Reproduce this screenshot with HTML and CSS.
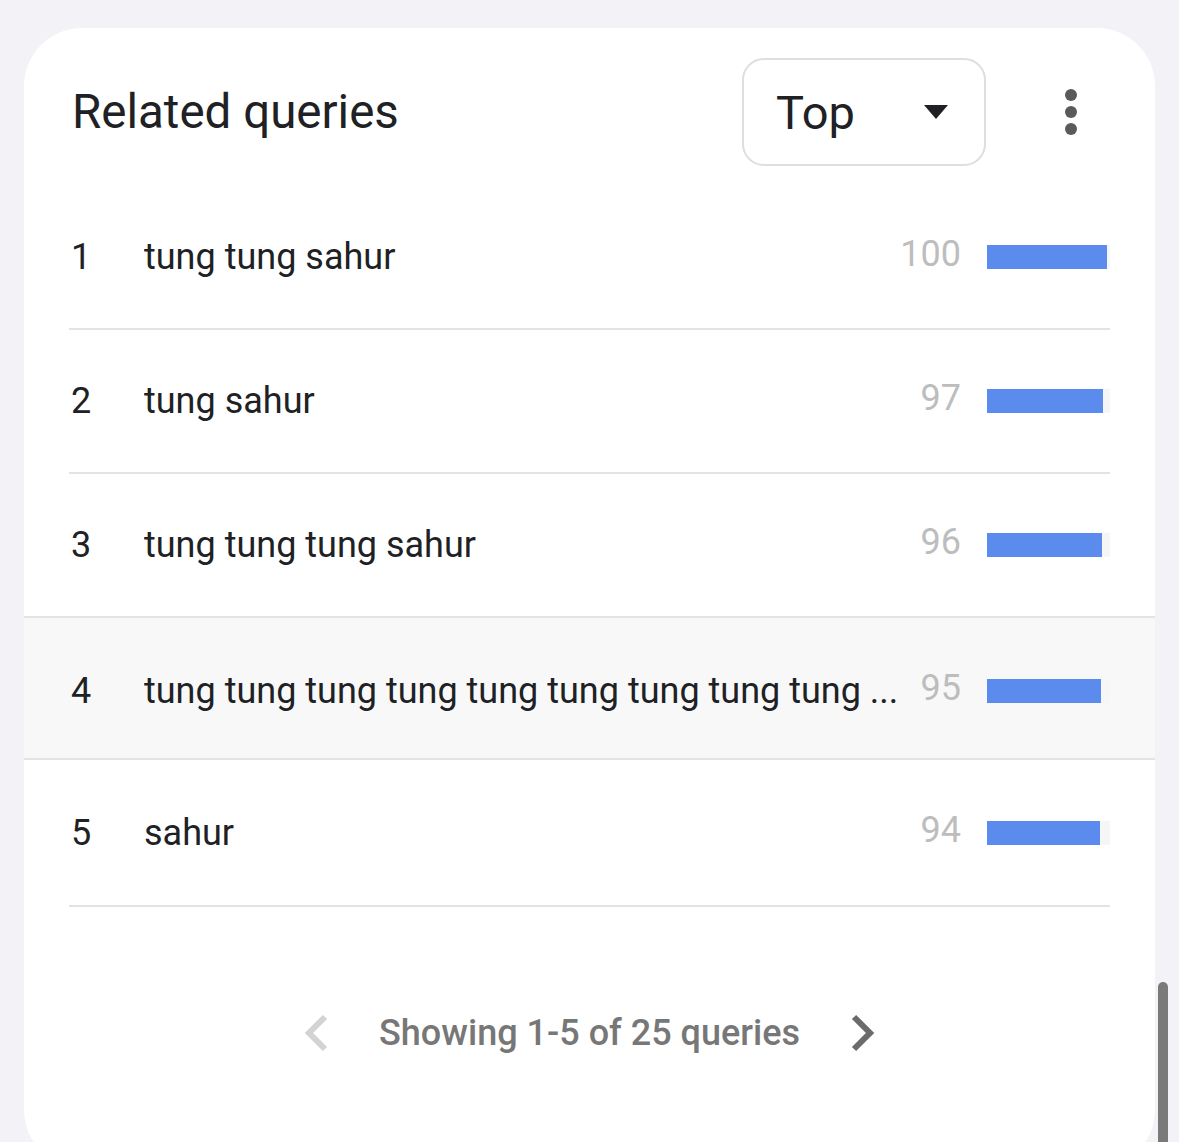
FILE: index.html
```html
<!DOCTYPE html>
<html>
<head>
<meta charset="utf-8">
<link rel="stylesheet" href="styles.css">
</head>
<body>
<div class="card">
  <div class="header">
    <h1 class="title">Related queries</h1>
    <div class="actions">
      <div class="select">
        <span class="select-label">Top</span>
        <svg class="caret" width="24" height="14" viewBox="0 0 24 14"><path d="M0 0 L24 0 L12 14 Z" fill="#202124"/></svg>
      </div>
      <div class="kebab">
        <span></span><span></span><span></span>
      </div>
    </div>
  </div>
  <div class="rows">
    <div class="row">
      <span class="rank">1</span>
      <span class="query">tung tung sahur</span>
      <span class="value">100</span>
      <span class="track"><span class="bar" style="width:120px"></span></span>
    </div>
    <div class="row">
      <span class="rank">2</span>
      <span class="query">tung sahur</span>
      <span class="value">97</span>
      <span class="track"><span class="bar" style="width:116px"></span></span>
    </div>
    <div class="row">
      <span class="rank">3</span>
      <span class="query">tung tung tung sahur</span>
      <span class="value">96</span>
      <span class="track"><span class="bar" style="width:115px"></span></span>
    </div>
    <div class="row row-active">
      <span class="rank">4</span>
      <span class="query">tung tung tung tung tung tung tung tung tung ...</span>
      <span class="value">95</span>
      <span class="track"><span class="bar" style="width:114px"></span></span>
    </div>
    <div class="row row-last">
      <span class="rank">5</span>
      <span class="query">sahur</span>
      <span class="value">94</span>
      <span class="track"><span class="bar" style="width:113px"></span></span>
    </div>
  </div>
  <div class="pager">
    <svg class="chev" width="26" height="38" viewBox="0 0 26 38"><path d="M22 3 L6 19 L22 35" fill="none" stroke="#d3d3d3" stroke-width="6"/></svg>
    <span class="pager-text">Showing 1-5 of 25 queries</span>
    <svg class="chev" width="26" height="38" viewBox="0 0 26 38"><path d="M4 3 L20 19 L4 35" fill="none" stroke="#6b6b6b" stroke-width="6"/></svg>
  </div>
</div>
<div class="scrollbar"></div>
</body>
</html>
```
FILE: styles.css
```css
html, body {
  margin: 0;
  padding: 0;
  height: 100%;
  overflow: hidden;
}
body {
  background: #f2f2f7;
  font-family: Roboto, "Noto Sans", sans-serif;
  color: #202124;
  position: relative;
}
.card {
  margin: 28px 24px 0 24px;
  width: 1131px;
  height: 1140px;
  background: #ffffff;
  border-radius: 58px;
  box-sizing: border-box;
  padding: 30px 45px 0 45px;
}
.header {
  display: flex;
  align-items: center;
  justify-content: space-between;
  height: 108px;
}
.title {
  margin: 0 0 0 3px;
  font-size: 47.5px;
  font-weight: 400;
  letter-spacing: 0;
  color: #202124;
}
.actions {
  display: flex;
  align-items: center;
}
.select {
  width: 244px;
  height: 108px;
  box-sizing: border-box;
  border: 2px solid #dedede;
  border-radius: 22px;
  display: flex;
  align-items: center;
  justify-content: space-between;
  padding: 0 36px 0 32px;
}
.select-label {
  font-size: 47px;
  color: #202124;
}
.caret {
  display: block;
}
.kebab {
  width: 12px;
  margin-left: 79px;
  margin-right: 33px;
  display: flex;
  flex-direction: column;
  gap: 5px;
}
.kebab span {
  width: 12px;
  height: 12px;
  border-radius: 50%;
  background: #5a5a5a;
}
.rows {
  margin-top: 20px;
}
.row {
  height: 144px;
  box-sizing: border-box;
  border-bottom: 2px solid #e3e3e3;
  display: flex;
  align-items: center;
}
.row-active {
  margin: -2px -45px 0 -45px;
  padding: 6px 45px 0 45px;
  height: 144px;
  border-top: 2px solid #e3e3e3;
  background: #f8f8f8;
}
.row-last {
  height: 147px;
}
.rank {
  width: 75px;
  padding-left: 2px;
  box-sizing: border-box;
  flex-shrink: 0;
  font-size: 36px;
  color: #202124;
}
.query {
  flex: 1;
  min-width: 0;
  font-size: 36px;
  color: #202124;
  white-space: nowrap;
  overflow: hidden;
}
.value {
  flex-shrink: 0;
  text-align: right;
  font-size: 36px;
  color: #bdbdbd;
  margin-top: -6px;
  margin-left: 10px;
}
.track {
  flex-shrink: 0;
  width: 123px;
  height: 24px;
  margin-left: 26px;
  background: #f6f6f6;
  display: flex;
}
.bar {
  height: 24px;
  background: #5b8ced;
}
.pager {
  display: flex;
  justify-content: center;
  align-items: center;
  margin-top: 105px;
  gap: 50px;
}
.pager-text {
  font-size: 36px;
  font-weight: 500;
  color: #777777;
}
.chev {
  display: block;
}
.scrollbar {
  position: absolute;
  left: 1158px;
  top: 982px;
  width: 10px;
  height: 200px;
  border-radius: 5px;
  background: #7a7a7a;
}
```
